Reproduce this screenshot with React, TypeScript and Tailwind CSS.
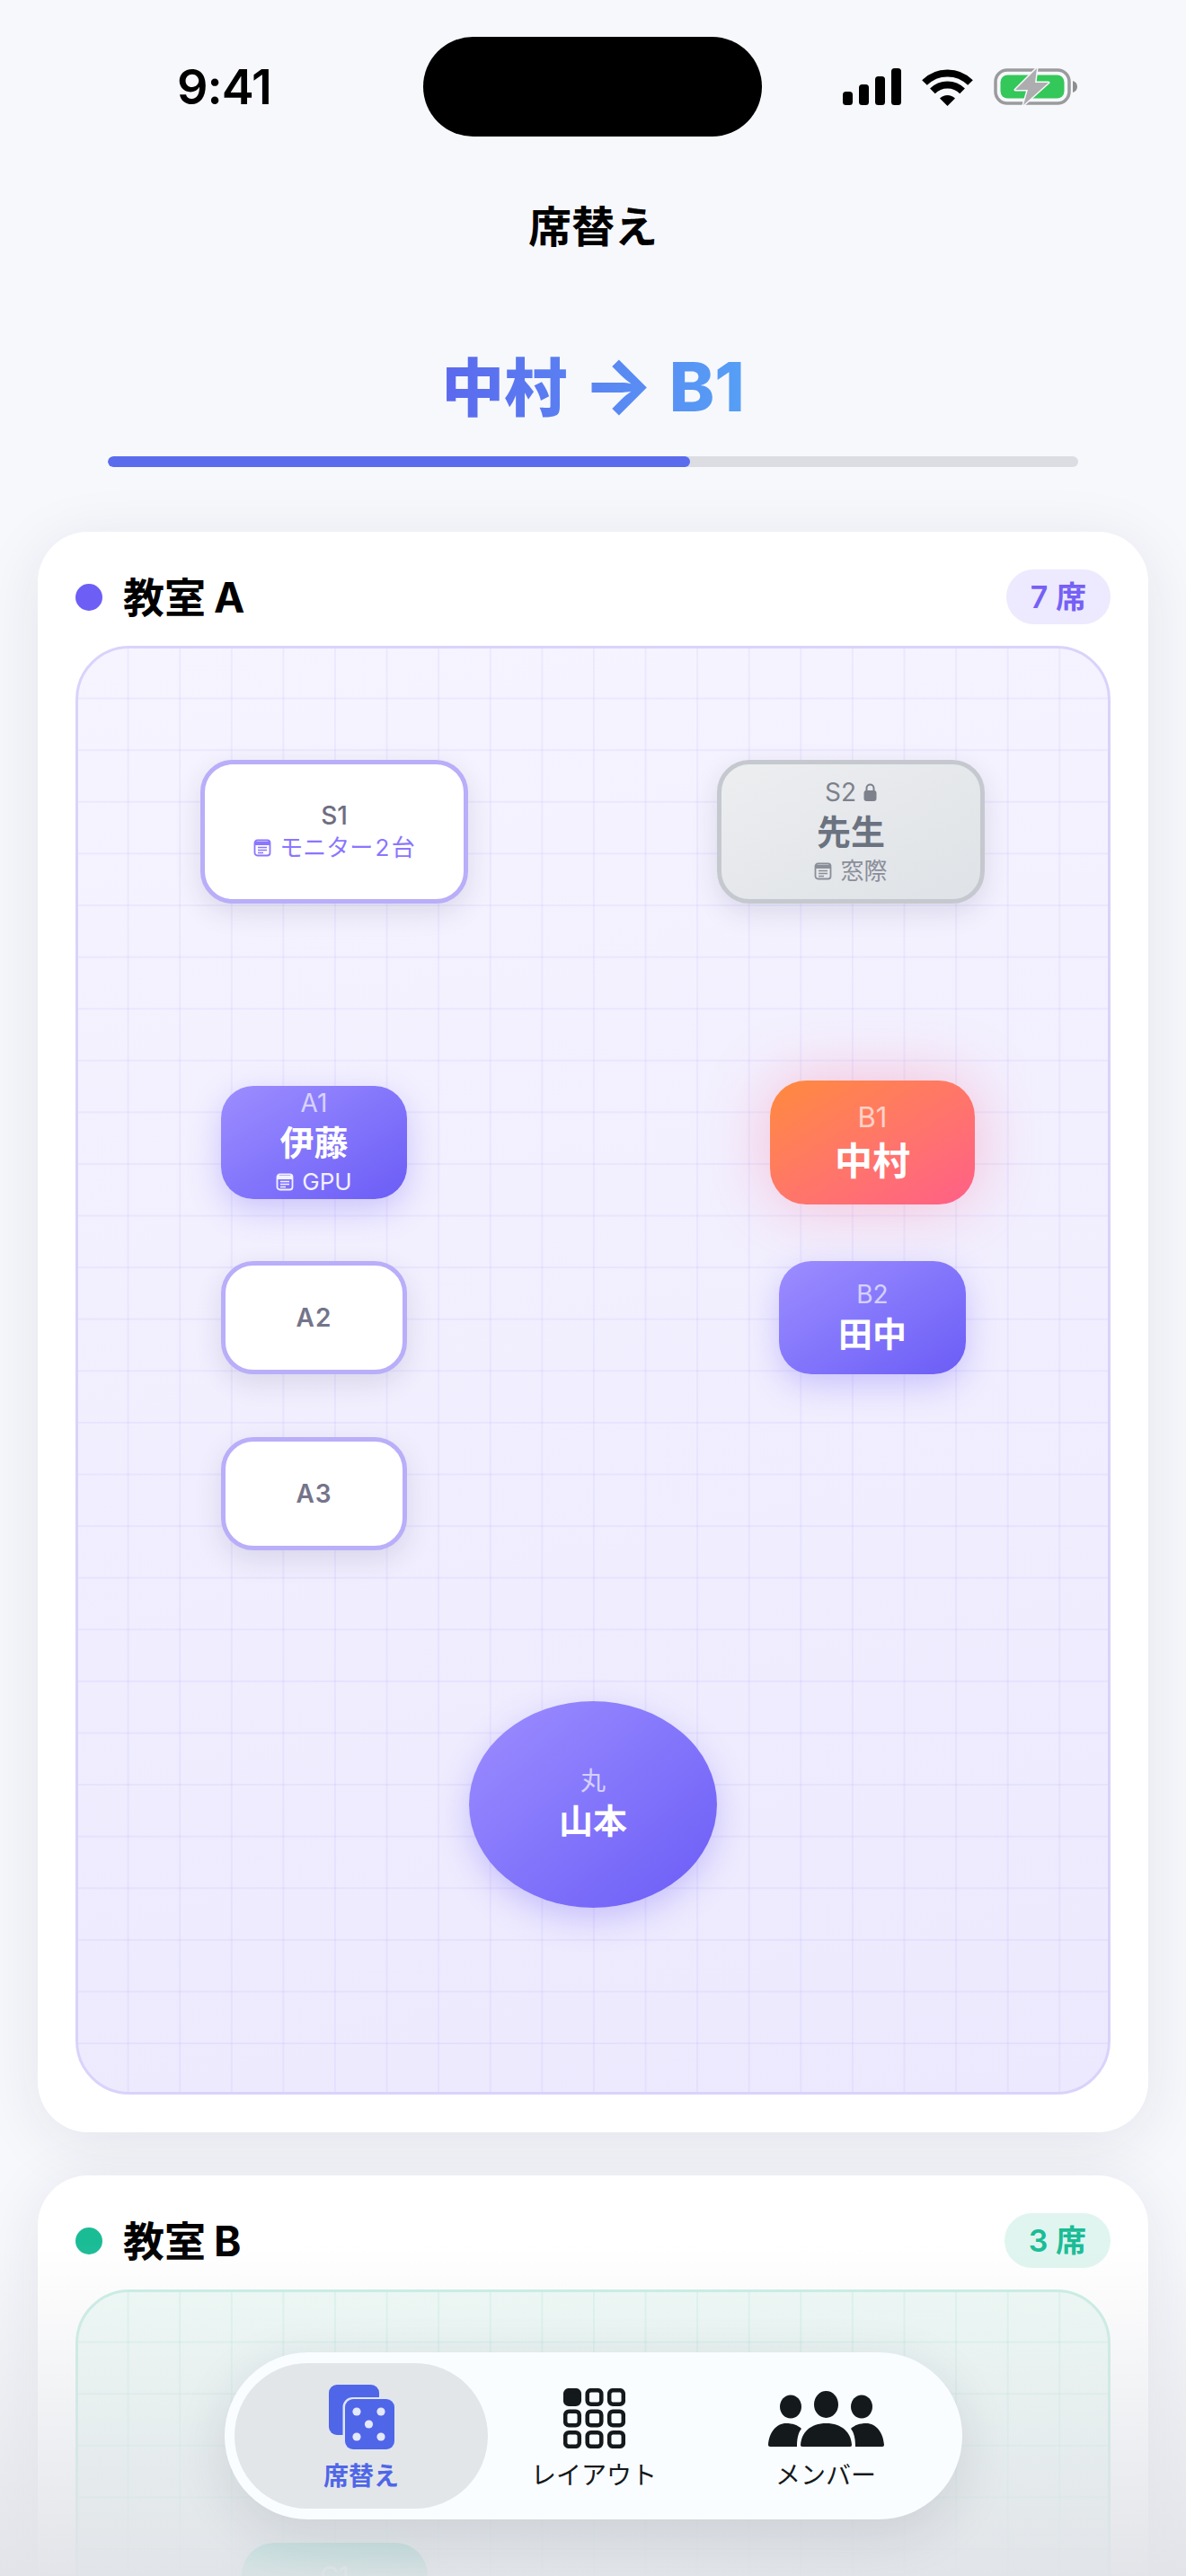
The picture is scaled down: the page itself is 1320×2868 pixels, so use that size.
import React from 'react';

const noteIcon = (
  <svg viewBox="0 0 20 20" className="w-[20px] h-[20px] shrink-0" fill="none" stroke="currentColor">
    <rect x="1.5" y="1.5" width="17" height="17" rx="3" strokeWidth="1.8" />
    <path d="M2 5h16" strokeWidth="4" />
    <path d="M5 9.5h10M5 12.5h10M5 15.5h6" strokeWidth="1.4" />
  </svg>
);

function StatusBar() {
  return (
    <div className="grid grid-cols-[471px_377px_1fr] items-center h-[193px]">
      <div className="pl-[197px] text-[54px] leading-none font-semibold text-black tracking-[-1px]">9:41</div>
      <div className="h-[111px] rounded-[56px] bg-black" />
      <div className="flex items-center pl-[90px] gap-[23px]">
        <svg viewBox="0 0 65 41" className="w-[65px] h-[41px]" fill="#000">
          <rect x="0" y="26" width="11" height="15" rx="3.5" />
          <rect x="18" y="18" width="11" height="23" rx="3.5" />
          <rect x="36" y="9" width="11" height="32" rx="3.5" />
          <rect x="54" y="0" width="11" height="41" rx="3.5" />
        </svg>
        <svg viewBox="0 0 57 42" className="w-[57px] h-[42px]" fill="none" stroke="#000" strokeWidth="8">
          <path d="M3 16A36 36 0 0 1 54 16" />
          <path d="M11.9 25.4A23.5 23.5 0 0 1 45.1 25.4" />
          <path d="M28.5 42L20 33.5A12 12 0 0 1 37 33.5Z" fill="#000" stroke="none" />
        </svg>
        <svg viewBox="0 0 93 43" className="w-[93px] h-[43px]">
          <rect x="2" y="3" width="82" height="37" rx="13" fill="none" stroke="#9b9b9d" strokeWidth="3.5" />
          <rect x="7.5" y="8.5" width="71" height="26" rx="8" fill="#34c759" />
          <path d="M88 15c3 1 5 3 5 6.500s-2 5.500-5 6.500z" fill="#8e8e90" />
          <path d="M48 1L24 25H38L33 42L61 17H46Z" fill="#adadaf" stroke="#f7f8fc" strokeWidth="3" strokeLinejoin="round" paintOrder="stroke" />
        </svg>
      </div>
    </div>
  );
}

interface Seat {
  id: string;
  name?: string;
  note?: string;
  pos: string;
  look: 'empty' | 'locked' | 'filled' | 'active' | 'teal';
  lock?: boolean;
}

const roomASeats: Seat[] = [
  { id: 'S1', note: 'モニター 2 台', pos: 'left-[136px] top-[124px] w-[298px] h-[160px] rounded-[36px]', look: 'empty' },
  { id: 'S2', name: '先生', note: '窓際', lock: true, pos: 'left-[711px] top-[124px] w-[298px] h-[160px] rounded-[36px]', look: 'locked' },
  { id: 'A1', name: '伊藤', note: 'GPU', pos: 'left-[159px] top-[487px] w-[207px] h-[126px] rounded-[36px]', look: 'filled' },
  { id: 'B1', name: '中村', pos: 'left-[770px] top-[481px] w-[228px] h-[138px] rounded-[40px]', look: 'active' },
  { id: 'A2', pos: 'left-[159px] top-[682px] w-[207px] h-[126px] rounded-[36px]', look: 'empty' },
  { id: 'B2', name: '田中', pos: 'left-[780px] top-[682px] w-[208px] h-[126px] rounded-[36px]', look: 'filled' },
  { id: 'A3', pos: 'left-[159px] top-[878px] w-[207px] h-[126px] rounded-[36px]', look: 'empty' },
  { id: '丸', name: '山本', pos: 'left-[435px] top-[1172px] w-[276px] h-[230px] rounded-[50%]', look: 'filled' },
];

// only the top of C1 shows above the screen edge
const roomBSeats: Seat[] = [
  { id: 'C1', pos: 'left-[182px] top-[279px] w-[207px] h-[126px] pb-[52px] rounded-[36px]', look: 'teal' },
];

const seatLooks = {
  empty: 'bg-white border-[5px] border-[#b9aef9] shadow-[0_10px_30px_rgba(40,40,80,0.12)]',
  locked: 'bg-gradient-to-br from-[#eceef0] to-[#dfe2e6] border-[5px] border-[#c5c9cf] shadow-[0_10px_30px_rgba(40,40,80,0.12)]',
  filled: 'bg-gradient-to-br from-[#9d8dff] to-[#6c5cf6] shadow-[0_12px_36px_rgba(108,92,246,0.3)]',
  active: 'bg-gradient-to-br from-[#ff8a3a] to-[#ff5f86] shadow-[0_0_70px_rgba(255,95,134,0.35)]',
  teal: 'bg-gradient-to-br from-[#3fd3b2] to-[#17b391] shadow-[0_12px_36px_rgba(23,179,145,0.3)]',
};

function SeatCard({ seat }: { seat: Seat }) {
  const onColor = seat.look === 'filled' || seat.look === 'active' || seat.look === 'teal';
  const big = seat.look === 'active';
  const plainEmpty = seat.look === 'empty' && !seat.note;

  return (
    <div className={`absolute flex flex-col items-center justify-center ${seat.pos} ${seatLooks[seat.look]}`}>
      <div
        className={`flex items-center gap-[8px] ${big ? 'text-[31px] leading-[40px]' : 'text-[28px] leading-[36px]'} ${
          onColor ? 'text-white/65' : plainEmpty ? 'font-semibold text-[#74748a] tracking-[1px]' : seat.look === 'locked' ? 'text-[#7d818c]' : 'font-medium text-[#6e6e80]'
        } ${seat.id === '丸' ? 'text-[22px]' : ''}`}
      >
        {seat.id}
        {seat.lock && (
          <svg viewBox="0 0 15 20" className="w-[15px] h-[20px]" fill="#7d818c">
            <path d="M3.500 9V5.500a4 4 0 0 1 8 0V9" fill="none" stroke="#7d818c" strokeWidth="2" />
            <rect x="0.500" y="8" width="14" height="12" rx="3" />
          </svg>
        )}
      </div>
      {seat.name && (
        <div
          className={`font-bold ${big ? 'text-[42px] leading-[57px]' : 'text-[38px] leading-[52px]'} ${
            onColor ? 'text-white' : 'text-[#6b7280]'
          }`}
        >
          {seat.name}
        </div>
      )}
      {seat.note && (
        <div
          className={`flex items-center gap-[9px] text-[26px] leading-[36px] [word-spacing:-5px] ${
            seat.look === 'filled' ? 'text-white/90' : seat.look === 'locked' ? 'text-[#8a8e99]' : 'text-[#8a76ff]'
          }`}
        >
          {noteIcon}
          {seat.note}
        </div>
      )}
    </div>
  );
}

function RoomCard({
  title,
  count,
  seats,
  canvasClass,
  dotClass,
  pillClass,
}: {
  title: string;
  count: string;
  seats: Seat[];
  canvasClass: string;
  dotClass: string;
  pillClass: string;
}) {
  return (
    <section className="mx-[42px] rounded-[56px] bg-white px-[42px] pt-[42px] pb-[42px] shadow-[0_12px_70px_rgba(30,30,60,0.09)]">
      <div className="flex items-center justify-between h-[61px] mb-[24px]">
        <div className="flex items-center gap-[23px]">
          <span className={`w-[30px] h-[30px] rounded-full ${dotClass}`} />
          <h2 className="text-[46px] leading-none font-bold text-black [word-spacing:-2px]">{title}</h2>
        </div>
        <span className={`flex items-center h-[61px] px-[27px] rounded-full text-[34px] font-semibold ${pillClass}`}>
          {count}
        </span>
      </div>
      <div className={`relative h-[1613px] rounded-[60px] border-[3px] bg-origin-border ${canvasClass}`}>
        {seats.map(seat => (
          <SeatCard key={seat.id} seat={seat} />
        ))}
      </div>
    </section>
  );
}

function BottomNav() {
  return (
    <nav className="absolute left-[250px] top-[2619px] w-[821px] h-[186px] rounded-full bg-[#fafdff] shadow-[0_16px_60px_rgba(30,30,60,0.12)] flex items-center pl-[11px]">
      <div className="w-[282px] h-[162px] rounded-full bg-[#e3e6e9] flex flex-col items-center pt-[24px]">
        <svg viewBox="0 0 73 72" className="w-[73px] h-[72px]">
          <rect x="0" y="0" width="56" height="56" rx="9" fill="#4f66e8" />
          <rect x="15.500" y="14" width="59" height="60" rx="11" fill="#dfe5f8" />
          <rect x="18" y="16" width="55" height="56" rx="9" fill="#4f66e8" />
          <g fill="#e3e8fb">
            <circle cx="31" cy="30" r="4.600" />
            <circle cx="58" cy="30" r="4.600" />
            <circle cx="44.500" cy="44" r="4.600" />
            <circle cx="31" cy="58" r="4.600" />
            <circle cx="58" cy="58" r="4.600" />
          </g>
        </svg>
        <span className="mt-[12px] text-[28px] leading-[36px] font-semibold text-[#4f66e8]">席替え</span>
      </div>
      <div className="w-[236px] flex flex-col items-center pt-[8px]">
        <svg viewBox="0 0 69 67" className="w-[69px] h-[67px]" fill="none" stroke="#14191c" strokeWidth="4.500">
          <rect x="2.200" y="2.200" width="15.600" height="15.600" rx="4" fill="#14191c" />
          <rect x="26.700" y="2.200" width="15.600" height="15.600" rx="4" />
          <rect x="51.200" y="2.200" width="15.600" height="15.600" rx="4" />
          <rect x="2.200" y="25.700" width="15.600" height="15.600" rx="4" />
          <rect x="26.700" y="25.700" width="15.600" height="15.600" rx="4" />
          <rect x="51.200" y="25.700" width="15.600" height="15.600" rx="4" />
          <rect x="2.200" y="49.200" width="15.600" height="15.600" rx="4" />
          <rect x="26.700" y="49.200" width="15.600" height="15.600" rx="4" />
          <rect x="51.200" y="49.200" width="15.600" height="15.600" rx="4" />
        </svg>
        <span className="mt-[12px] text-[28px] leading-[36px] font-normal text-[#14191c]">レイアウト</span>
      </div>
      <div className="w-[280px] flex flex-col items-center pt-[8px]">
        <svg viewBox="0 0 129 62" className="w-[129px] h-[62px] mt-[3px]" fill="#14191c">
          <ellipse cx="25" cy="17.500" rx="12" ry="13" />
          <ellipse cx="64.500" cy="15" rx="13.500" ry="15" />
          <ellipse cx="104" cy="17.500" rx="12" ry="13" />
          <path d="M2 62C1 62 0 61 0 60C1 46 9 36 20 36C27 36 33 38 37 42C33 47 32 54 32 62Z" />
          <path d="M127 62C128 62 129 61 129 60C128 46 120 36 109 36C102 36 96 38 92 42C96 47 97 54 97 62Z" />
          <path d="M38 62C36.500 62 36 61 36 60C37 46 47 36 64.500 36C82 36 92 46 93 60C93 61 92.500 62 91 62Z" />
        </svg>
        <span className="mt-[14px] text-[28px] leading-[36px] font-normal text-[#14191c]">メンバー</span>
      </div>
    </nav>
  );
}

export default function App() {
  return (
    <div className="relative w-[1320px] h-[2868px] overflow-hidden bg-[#f7f8fc] font-['Inter','Noto_Sans_CJK_JP',sans-serif]">
      <StatusBar />
      <h1 className="h-[120px] flex items-center justify-center text-[48px] font-bold text-black">席替え</h1>

      <div className="mt-[77px] h-[80px] flex items-center justify-center">
        <span className="text-[76px] leading-[84px] font-extrabold text-transparent bg-clip-text bg-gradient-to-r from-[#5b68ee] to-[#569ff6]">
          <span className="text-[70px]">中村</span> <span className="text-[84px]">→</span> B1
        </span>
      </div>

      <div className="mt-[38px] mx-[120px] h-[12px] rounded-full bg-[#dcdde2] overflow-hidden">
        <div className="w-[60%] h-full rounded-full bg-[#5b6bee]" />
      </div>

      <div className="mt-[72px] flex flex-col gap-[48px]">
        <RoomCard
          title="教室 A"
          count="7 席"
          seats={roomASeats}
          dotClass="bg-[#6d5ef5]"
          pillClass="bg-[#ede9fe] text-[#7561f5]"
          canvasClass="border-[#d9d3fb] [background-image:linear-gradient(rgba(108,92,246,0.07)_2px,transparent_2px),linear-gradient(90deg,rgba(108,92,246,0.07)_2px,transparent_2px),linear-gradient(170deg,#f6f4ff,#ece9fe)] [background-size:57.6px_57.6px,57.6px_57.6px,100%_100%]"
        />
        <RoomCard
          title="教室 B"
          count="3 席"
          seats={roomBSeats}
          dotClass="bg-[#1abc96]"
          pillClass="bg-[#e0f5ef] text-[#1abc96]"
          canvasClass="border-[#c6ede2] [background-image:linear-gradient(rgba(26,188,150,0.09)_2px,transparent_2px),linear-gradient(90deg,rgba(26,188,150,0.09)_2px,transparent_2px),linear-gradient(170deg,#eefaf6,#e3f6f0)] [background-size:57.6px_57.6px,57.6px_57.6px,100%_100%]"
        />
      </div>

      <div className="absolute left-0 right-0 bottom-0 h-[370px] bg-gradient-to-b from-[#e1e3e8]/0 to-[#e1e3e8]/95" />
      <BottomNav />
    </div>
  );
}
